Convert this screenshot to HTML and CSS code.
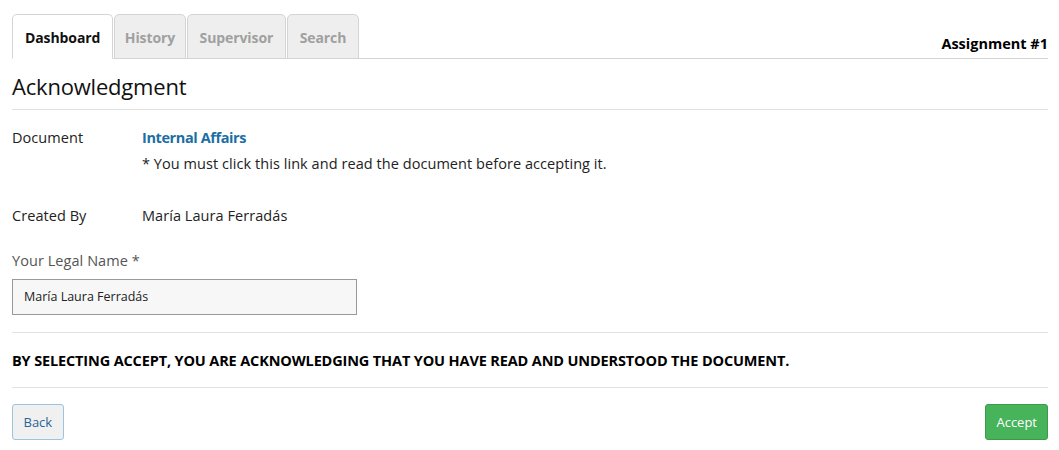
FILE: index.html
```html
<!DOCTYPE html>
<html>
<head>
<meta charset="utf-8">
<link rel="stylesheet" href="styles.css">
</head>
<body>
<div class="page">
  <div class="tabbar">
    <ul class="tabs">
      <li class="tab active">Dashboard</li>
      <li class="tab tab-history">History</li>
      <li class="tab tab-supervisor">Supervisor</li>
      <li class="tab tab-search">Search</li>
    </ul>
    <div class="assignment">Assignment #1</div>
  </div>
  <h1 class="title">Acknowledgment</h1>
  <div class="row row-doc">
    <div class="label">Document</div>
    <div class="value">
      <a class="doc-link" href="#">Internal Affairs</a>
      <div class="note">* You must click this link and read the document before accepting it.</div>
    </div>
  </div>
  <div class="row row-created">
    <div class="label">Created By</div>
    <div class="value">María Laura Ferradás</div>
  </div>
  <div class="field">
    <label class="field-label">Your Legal Name *</label>
    <div class="input">María Laura Ferradás</div>
  </div>
  <div class="statement">BY SELECTING ACCEPT, YOU ARE ACKNOWLEDGING THAT YOU HAVE READ AND UNDERSTOOD THE DOCUMENT.</div>
  <div class="actions">
    <button class="btn btn-back">Back</button>
    <button class="btn btn-accept">Accept</button>
  </div>
</div>
</body>
</html>
```
FILE: styles.css
```css
html, body {
  margin: 0;
  padding: 0;
  background: #fff;
}
body {
  font-family: "Open Sans", "Noto Sans", sans-serif;
  font-size: 14.5px;
  letter-spacing: 0.06px;
  color: #222;
}
.page {
  padding: 14px 11px 0 12px;
}
.tabbar {
  display: flex;
  justify-content: space-between;
  align-items: flex-end;
  border-bottom: 1px solid #d4d4d4;
  height: 44px;
}
.tabs {
  list-style: none;
  margin: 0;
  padding: 0;
  display: flex;
  height: 45px;
  margin-bottom: -1px;
}
.tab {
  box-sizing: border-box;
  height: 45px;
  padding: 0 11px;
  line-height: 45px;
  font-weight: 700;
  font-size: 14px;
  color: #a0a0a0;
  background: #eeeeee;
  border: 1px solid #d4d4d4;
  border-radius: 5px 5px 0 0;
  margin-right: 1px;
  letter-spacing: -0.1px;
}
.tab-history {
  padding: 0 9.5px;
}
.tab-supervisor {
  padding: 0 12px;
}
.tab-search {
  padding: 0 11.5px;
}
.tab.active {
  background: #fff;
  color: #111;
  border-bottom-color: #fff;
  padding: 0 12px;
}
.assignment {
  font-weight: 700;
  font-size: 14.5px;
  color: #000;
  padding-bottom: 5px;
  letter-spacing: 0;
}
.title {
  margin: 0;
  font-weight: 400;
  font-size: 22px;
  color: #111;
  padding: 12px 0 8px;
  line-height: 30px;
  border-bottom: 1px solid #e2e2e2;
  letter-spacing: -0.2px;
}
.row {
  display: flex;
}
.label {
  width: 130px;
  flex-shrink: 0;
}
.row-doc {
  padding-top: 18px;
  line-height: 20px;
}
.doc-link {
  display: block;
  color: #1c6ea4;
  font-weight: 700;
  text-decoration: none;
  letter-spacing: -0.4px;
}
.note {
  margin-top: 6px;
}
.row-created {
  padding-top: 32px;
  line-height: 20px;
}
.field {
  padding-top: 25px;
  padding-bottom: 17px;
  border-bottom: 1px solid #e2e2e2;
}
.field-label {
  display: block;
  color: #555;
  line-height: 20px;
  margin-bottom: 8px;
}
.input {
  box-sizing: border-box;
  width: 345px;
  height: 36px;
  border: 1px solid #999;
  background: #f7f7f7;
  font-size: 12.5px;
  letter-spacing: 0;
  padding: 0 11px;
  line-height: 34px;
  color: #222;
}
.statement {
  font-weight: 700;
  font-size: 14.5px;
  color: #000;
  padding: 18px 0 16px;
  line-height: 20px;
  border-bottom: 1px solid #e2e2e2;
  letter-spacing: -0.14px;
}
.actions {
  display: flex;
  justify-content: space-between;
  padding-top: 16px;
}
.btn {
  box-sizing: border-box;
  height: 36px;
  font-family: inherit;
  font-size: 13px;
  border-radius: 3px;
  padding: 0 10px;
  cursor: pointer;
}
.btn-back {
  padding: 0 10.5px;
  background: #f0f0f0;
  border: 1px solid #9cc4e0;
  color: #2a6496;
}
.btn-accept {
  background: #47b35b;
  border: 1px solid #3b9a4c;
  color: #fff;
}
```
